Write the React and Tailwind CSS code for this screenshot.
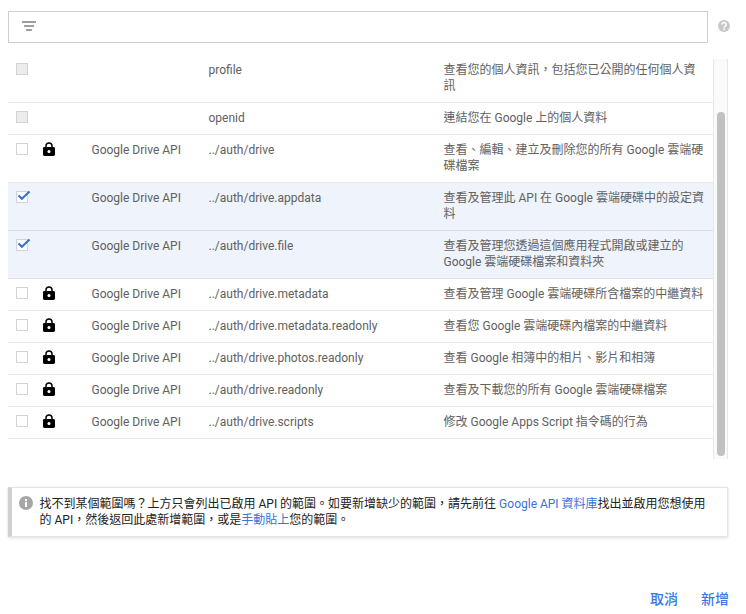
import React from "react";

const ROWS = [
  { state: "disabled", api: "", scope: "profile", lines: ["查看您的個人資訊，包括您已公開的任何個人資", "訊"] },
  { state: "disabled", api: "", scope: "openid", lines: ["連結您在 Google 上的個人資料"] },
  { locked: true, api: "Google Drive API", scope: "../auth/drive", lines: ["查看、編輯、建立及刪除您的所有 Google 雲端硬", "碟檔案"] },
  { state: "checked", api: "Google Drive API", scope: "../auth/drive.appdata", lines: ["查看及管理此 API 在 Google 雲端硬碟中的設定資", "料"] },
  { state: "checked", api: "Google Drive API", scope: "../auth/drive.file", lines: ["查看及管理您透過這個應用程式開啟或建立的", "Google 雲端硬碟檔案和資料夾"] },
  { locked: true, api: "Google Drive API", scope: "../auth/drive.metadata", lines: ["查看及管理 Google 雲端硬碟所含檔案的中繼資料"] },
  { locked: true, api: "Google Drive API", scope: "../auth/drive.metadata.readonly", lines: ["查看您 Google 雲端硬碟內檔案的中繼資料"] },
  { locked: true, api: "Google Drive API", scope: "../auth/drive.photos.readonly", lines: ["查看 Google 相簿中的相片、影片和相簿"] },
  { locked: true, api: "Google Drive API", scope: "../auth/drive.readonly", lines: ["查看及下載您的所有 Google 雲端硬碟檔案"] },
  { locked: true, api: "Google Drive API", scope: "../auth/drive.scripts", lines: ["修改 Google Apps Script 指令碼的行為"] },
];

function Checkbox({ state }) {
  return (
    <span
      className={`relative mt-px block size-3 shrink-0 border ${
        state === "disabled" ? "border-[#d3d3d3] bg-[#ececec]" : "border-[#d3d3d3] bg-white"
      }`}
    >
      {state === "checked" && (
        <svg className="absolute -top-px left-0 h-[10px] w-[14px]" viewBox="0 0 14 10" fill="none">
          <path d="M1.5 4.4 L4.9 7.8 L12.5 0.4" stroke="#3a72d8" strokeWidth="2.1" />
        </svg>
      )}
    </span>
  );
}

function LockIcon() {
  return (
    <svg className="block h-[14px] w-3" viewBox="0 0 12 14">
      <path d="M3 6V3.9a3 3 0 0 1 6 0V6" fill="none" stroke="#000" strokeWidth="1.5" />
      <path
        fillRule="evenodd"
        d="M1.4 5h9.2A1.4 1.4 0 0 1 12 6.4v6.2a1.4 1.4 0 0 1-1.4 1.4H1.4A1.4 1.4 0 0 1 0 12.6V6.4A1.4 1.4 0 0 1 1.4 5zM6 7.9a1.6 1.6 0 1 0 0 3.2a1.6 1.6 0 0 0 0-3.2z"
      />
    </svg>
  );
}

function Row({ row }) {
  const checked = row.state === "checked";
  return (
    <div
      className={`flex shrink-0 items-start border-b pt-[7px] pb-2 pl-2 ${
        checked ? "border-[#d8deea] bg-[#eef3fc]" : "border-[#e8e8e8]"
      }`}
    >
      <div className="w-[27px] shrink-0"><Checkbox state={row.state} /></div>
      <div className="w-[48.5px] shrink-0">{row.locked && <LockIcon />}</div>
      <div className="w-[117px] shrink-0">{row.api}</div>
      <div className="w-[235px] shrink-0">{row.scope}</div>
      <div>
        {row.lines.map((l) => <div key={l}>{l}</div>)}
      </div>
    </div>
  );
}

export default function App() {
  return (
    <div className="flex h-[614px] w-[746px] flex-col overflow-hidden bg-white pt-[11px] pl-2 font-[Roboto,'Noto_Sans_CJK_TC',sans-serif] text-xs leading-4 whitespace-nowrap text-[#616161]">
      <div className="flex shrink-0 items-center">
        <div className="flex h-8 w-[700px] items-start border border-[#cfcfcf] pt-[9px] pl-[13px]">
          <svg className="h-[10px] w-[14px]" viewBox="0 0 14 10" fill="#9e9e9e">
            <path d="M0 0h14v2H0zM2 4h10v2H2zM4 8h6v2H4z" />
          </svg>
        </div>
        <svg className="mb-[2px] ml-[10px] size-3" viewBox="0 0 12 12">
          <circle cx="6" cy="6" r="6" fill="#c8c8c8" />
          <path d="M3.9 4.6a2.1 2 0 1 1 3.4 1.5c-.8.6-1.2.8-1.2 1.7" fill="none" stroke="#fff" strokeWidth="1.5" />
          <path d="M5.3 8.6h1.6v1.6H5.3z" fill="#fff" />
        </svg>
      </div>

      <div className="mt-4 flex h-[400px] w-[720px] shrink-0 overflow-hidden">
        <div className="-mt-1 flex w-[705px] flex-col">
          {ROWS.map((row) => <Row key={row.scope} row={row} />)}
        </div>
        <div className="flex w-[15px] justify-center border-x border-[#e8e8e8] bg-[#fafafa] pt-[53px]">
          <div className="h-[344px] w-2 rounded-full bg-[#c1c1c1]" />
        </div>
      </div>

      <div className="mt-7 flex h-[50px] w-[720px] shrink-0 border border-l-4 border-[#e4e4e4] border-l-[#d0d0d0] pt-2 pl-[7px] text-[#212121] shadow-[0_1px_3px_rgba(0,0,0,0.14)]">
        <svg className="mr-[6.5px] size-[14px] shrink-0" viewBox="0 0 14 14">
          <circle cx="7" cy="7" r="7" fill="#a6a6a6" />
          <path d="M6 3h2v2H6zM6 6h2v5H6z" fill="#fff" />
        </svg>
        <div>
          <div>
            找不到某個範圍嗎？上方只會列出已啟用 API 的範圍。如要新增缺少的範圍，請先前往 <a className="text-[#3b72dd]">Google API 資料庫</a>找出並啟用您想使用
          </div>
          <div>的 API，然後返回此處新增範圍，或是<a className="text-[#3b72dd]">手動貼上</a>您的範圍。</div>
        </div>
      </div>

      <div className="mt-[52px] mr-[17px] flex shrink-0 justify-end gap-[23px] text-sm leading-5 font-medium text-[#3b78e7]">
        <button>取消</button>
        <button>新增</button>
      </div>
    </div>
  );
}
